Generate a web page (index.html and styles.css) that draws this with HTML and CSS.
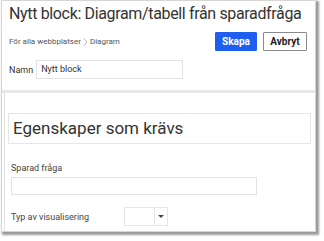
FILE: index.html
```html
<!DOCTYPE html>
<html>
<head>
<meta charset="utf-8">
<link rel="stylesheet" href="styles.css">
</head>
<body>
<div class="window">
  <div class="header">
    <h1 class="title">Nytt block: Diagram/tabell från sparadfråga</h1>
    <div class="toolbar">
      <div class="crumbs">För alla webbplatser <svg class="sep" width="5" height="8" viewBox="0 0 5 8"><path d="M0.8 0.5L4 4L0.8 7.5" fill="none" stroke="#999" stroke-width="0.8"/></svg> Diagram</div>
      <div class="buttons">
        <button class="btn primary">Skapa</button>
        <button class="btn secondary">Avbryt</button>
      </div>
    </div>
    <div class="name-row">
      <label class="name-label">Namn</label>
      <div class="input name-input">Nytt block</div>
    </div>
  </div>
  <div class="body">
    <div class="section-head">Egenskaper som krävs</div>
    <div class="field">
      <div class="field-label">Sparad fråga</div>
      <div class="input query-input"></div>
    </div>
    <div class="field-row">
      <div class="field-label">Typ av visualisering</div>
      <div class="select">
        <div class="select-value"></div>
        <div class="select-arrow"><svg width="6" height="3" viewBox="0 0 6 3"><path d="M0 0H6L3 3Z" fill="#444"/></svg></div>
      </div>
    </div>
  </div>
</div>
</body>
</html>
```
FILE: styles.css
```css
* { box-sizing: border-box; }
html, body { margin: 0; padding: 0; background: #fff; }
body {
  font-family: Roboto, "Open Sans", sans-serif;
  color: #333;
  width: 324px;
  height: 241px;
  overflow: hidden;
}
.window {
  margin: 0 0 0 1px;
  width: 315px;
  height: 232px;
  border: 1px solid #d6d6d6;
  background: #fff;
  box-shadow: 2px 2px 2px 1px #9a9a9a;
  display: flex;
  flex-direction: column;
}
.header {
  padding: 3px 8px 0 7px;
  background: #fff;
  border-bottom: 3px solid #e8e8e8;
  height: 92px;
}
.title {
  margin: 0;
  font-size: 16px;
  font-weight: 400;
  line-height: 20px;
  color: #333;
  white-space: nowrap;
  letter-spacing: -0.35px;
}
.toolbar {
  display: flex;
  justify-content: space-between;
  align-items: center;
  margin-top: 8px;
}
.crumbs {
  font-size: 8px;
  color: #555;
  display: flex;
  align-items: center;
  gap: 2px;
}
.sep { display: block; }
.buttons { display: flex; gap: 6px; }
.btn {
  font-family: Roboto, sans-serif;
  font-weight: 700;
  font-size: 10px;
  height: 19px;
  padding: 0;
  border: 1px solid #8a8a8a;
  background: #fff;
  color: #222;
  border-radius: 1px;
}
.btn.primary {
  background: #1f5ff0;
  border-color: #1f5ff0;
  color: #fff;
  width: 42px;
}
.btn.secondary { width: 44px; }
.name-row {
  display: flex;
  align-items: center;
  gap: 3px;
  margin-top: 9px;
}
.name-label { font-size: 9px; color: #333; }
.input {
  border: 1px solid #e3e3e3;
  background: #fff;
  height: 19px;
}
.name-input {
  width: 147px;
  font-size: 9px;
  padding: 3px 4px;
  color: #333;
}
.body {
  flex: 1;
  border-left: 1px solid #e2e2e2;
  margin-left: 2px;
  padding: 20px 4px 0 3px;
}
.section-head {
  border: 1px solid #e6e6e6;
  height: 31px;
  font-size: 17px;
  line-height: 29px;
  padding-left: 4px;
  color: #333;
}
.field { padding: 19px 0 0 3px; }
.field-label { font-size: 9px; color: #444; }
.query-input { width: 246px; height: 18px; margin-top: 4px; }
.field-row {
  display: flex;
  align-items: center;
  padding: 12px 0 0 3px;
}
.field-row .field-label { width: 113px; }
.select {
  display: flex;
  border: 1px solid #e6e6e6;
  height: 19px;
  width: 44px;
}
.select-value { width: 30px; border-right: 1px solid #e6e6e6; }
.select-arrow { flex: 1; display: flex; align-items: center; justify-content: center; }
```
